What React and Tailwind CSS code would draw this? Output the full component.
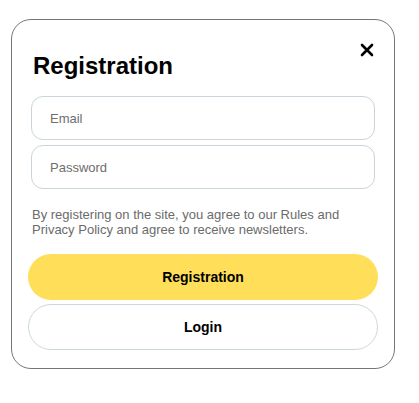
import React, { useState } from 'react';

function CloseIcon() {
    return (
        <svg width="14" height="14" viewBox="0 0 14 14" fill="none">
            <path d="M2 2L12 12M12 2L2 12" stroke="#000" strokeWidth="2.6" strokeLinecap="round" />
        </svg>
    );
}

export default function App() {
    const [email, setEmail] = useState('');
    const [password, setPassword] = useState('');

    return (
        <div className="min-h-screen bg-white pt-[19px] pl-[11px]" style={{ fontFamily: '"Liberation Sans", Arial, sans-serif' }}>
            <div className="relative w-[384px] h-[350px] border border-[#767676] rounded-[20px] bg-white px-4 pt-[32px]">
                <button className="absolute top-[22px] right-[19px] w-4 h-4 flex items-center justify-center">
                    <CloseIcon />
                </button>

                <h2 className="ml-[5px] text-[24px] leading-7 font-bold text-black">Registration</h2>

                <div className="mx-[3px] mt-4 flex flex-col gap-[5px]">
                    <input
                        type="email"
                        value={email}
                        onChange={e => setEmail(e.target.value)}
                        placeholder="Email"
                        className="h-[44px] w-full rounded-xl border border-[#c9d4db] pl-[18px] text-[13px] text-black placeholder:text-[#6d6d6d] outline-none"
                    />
                    <input
                        type="password"
                        value={password}
                        onChange={e => setPassword(e.target.value)}
                        placeholder="Password"
                        className="h-[44px] w-full rounded-xl border border-[#c9d4db] pl-[18px] text-[13px] text-black placeholder:text-[#6d6d6d] outline-none"
                    />
                </div>

                <p className="ml-1 mt-[18px] text-[13px] leading-[15px] text-[#6b6b6b]">
                    By registering on the site, you agree to our Rules and Privacy Policy and agree to receive newsletters.
                </p>

                <div className="mt-[17px] flex flex-col gap-1">
                    <button className="h-[46px] w-full rounded-full bg-[#ffde59] text-[14px] font-bold text-black">Registration</button>
                    <button className="h-[46px] w-full rounded-full border border-[#cdd7de] bg-white text-[14px] font-bold text-black">Login</button>
                </div>
            </div>
        </div>
    );
}
